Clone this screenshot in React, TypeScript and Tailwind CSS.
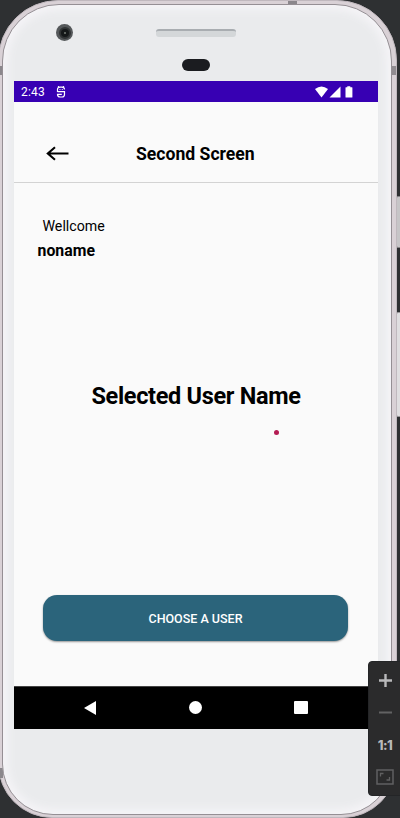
import React from "react";

function CameraHardware() {
  return (
    <div className="relative h-[76px] shrink-0">
      <div className="absolute left-[53px] top-[19px] flex h-[17px] w-[17px] items-center justify-center rounded-full bg-[#55585a]">
        <div className="flex h-[12px] w-[12px] items-center justify-center rounded-full border-2 border-[#303334] bg-[#151819]">
          <div className="h-[2px] w-[2px] rounded-full bg-[#747b75]" />
        </div>
      </div>
      <div className="absolute left-[153px] top-[24px] h-[8px] w-[80px] rounded-[3px] border-t-2 border-[#a9adb1] bg-[#d4d7d9]" />
      <div className="absolute left-[179px] top-[54px] h-[12px] w-[28px] rounded-full bg-[#1b1c20]" />
    </div>
  );
}

function StatusBar() {
  return (
    <div className="flex h-[21px] shrink-0 items-center bg-[#3700b3] pl-[7px] pr-[24px] text-white">
      <span className="w-[25px] whitespace-nowrap pt-px text-[12px] leading-[20px] tracking-[0.2px]">2:43</span>
      <svg className="ml-[10px]" width="10" height="12" viewBox="0 0 10 12" fill="none" stroke="currentColor" strokeWidth="1.2">
        <path d="M1.5 6V3.5Q1.5 1.2 4 1.2h2q2.5 0 2.5 2.3M1.5 5.7h7v2.5Q8.5 11 6 11H4Q1.5 11 1.5 8.3h4.3M2.1 .2l.8 1M7.9 .2l-.8 1M3.5 3.5h.9M5.8 3.5h.9" />
      </svg>
      <div className="ml-auto flex items-center">
        <svg width="13" height="12" viewBox="0 0 13 12" fill="currentColor"><path d="M0 3Q6.5-2 13 3L6.5 11.5Z" /></svg>
        <svg className="ml-[1px]" width="12" height="12" viewBox="0 0 12 12" fill="currentColor"><path d="M11.5 .5v11H.5Z" /></svg>
        <svg className="ml-[4px] mr-px" width="8" height="12" viewBox="0 0 8 12" fill="currentColor"><path d="M2.3 .3h3v1H7q.4 0 .4.5v9.2q0 .5-.4.5H.9q-.4 0-.4-.5V1.8q0-.5.4-.5h1.4Z" /></svg>
      </div>
    </div>
  );
}

function NavigationBar() {
  return (
    <div className="flex h-[43px] shrink-0 items-center border-t border-[#444] bg-black pb-px pl-[70px] text-white">
      <svg width="12" height="14" viewBox="0 0 12 14" fill="currentColor"><path d="M12 0v14L0 7Z" /></svg>
      <div className="ml-[93px] h-[13px] w-[13px] rounded-full bg-white" />
      <div className="ml-[92px] h-[13px] w-[14px] rounded-[1px] bg-white" />
    </div>
  );
}

function ZoomTools() {
  return (
    <div className="absolute left-[368px] top-[661px] flex h-[135px] w-[36px] flex-col items-center rounded-[4px] border border-[#242527] bg-[#2b2b2c] text-[#b9b9ba]">
      <svg className="mt-[12px] -ml-[2px] shrink-0" width="13" height="13" viewBox="0 0 13 13" stroke="currentColor" strokeWidth="2.4"><path d="M0 6.5h13M6.5 0v13" /></svg>
      <svg className="mt-[24px] -ml-[2px] shrink-0" width="13" height="3" viewBox="0 0 13 3" stroke="#626263" strokeWidth="2"><path d="M0 1.5h13" /></svg>
      <span className="mt-[22px] -ml-[2px] font-[Inter,sans-serif] text-[13px] leading-[18px] font-extrabold tracking-[-0.5px]">1:1</span>
      <svg className="mt-[15px] -ml-[2px] shrink-0" width="18" height="16" viewBox="0 0 18 16" fill="none" stroke="#606061">
        <path d="M1 1h16v14H1Z" strokeWidth="1.5" />
        <path d="M4.5 7.5v-3h3M13.5 8v3h-3" strokeWidth="1.3" />
      </svg>
    </div>
  );
}

export default function App() {
  return (
    <div className="relative flex h-[818px] w-[400px] overflow-hidden bg-[#2e3032] font-[Roboto,sans-serif]">
      <div className="absolute left-[396px] top-[196px] h-[52px] w-[6px] rounded-[2px] border border-[#868487] bg-[#c6c5c7]" />
      <div className="absolute left-[396px] top-[312px] h-[105px] w-[6px] rounded-[2px] border border-[#99979a] bg-[#dfdee0]" />

      <div className="relative -ml-[2px] h-[818px] w-[399px] shrink-0 rounded-t-[60px] rounded-b-[54px] border border-[#c0b8be] bg-[#d9d1d6] px-[3px] pt-[3px] pb-[2px]">
        <div className="absolute left-[289px] top-0 h-[3px] w-[9px] bg-[#8b878c]" />
        <div className="absolute right-0 top-[65px] h-[9px] w-[6px] bg-[#918c91]" />
        <div className="absolute left-0 top-[65px] h-[9px] w-[4px] bg-[#8b878c]" />
        <div className="absolute left-0 top-[767px] h-[10px] w-[4px] bg-[#8b878c]" />
        <div className="relative flex h-full w-[390px] flex-col rounded-t-[57px] rounded-b-[51px] border border-[#958f94] bg-[#eaebed] shadow-[inset_0_0_9px_5px_#f5f4f7]">
          <CameraHardware />
          <div className="ml-[11px] flex h-[648px] w-[364px] shrink-0 flex-col">
            <StatusBar />
            <main className="relative flex h-[584px] flex-col bg-[#fafafa] text-black">
              <header className="flex h-[81px] shrink-0 items-center border-b border-[#d3d3d3] pt-[23px] pl-[32px]">
                <svg width="24" height="16" viewBox="0 0 24 16" fill="none" stroke="currentColor" strokeWidth="2.1"><path d="M22.5 7.5H2M9 1.3L1.8 7.5L9 13.7" /></svg>
                <h1 className="ml-[66px] whitespace-nowrap text-[17.6px] leading-[24px] font-bold">Second Screen</h1>
              </header>
              <div className="pt-[31px] pl-[23.5px]">
                <p className="pl-[5px] text-[14.2px] leading-[24px]">Wellcome</p>
                <p className="mt-px text-[15.8px] leading-[24px] font-bold tracking-[0.05px]">noname</p>
              </div>
              <h2 className="mt-[117px] text-center text-[23.5px] leading-[32px] font-bold tracking-[-0.32px]">Selected User Name</h2>
              <div className="absolute left-[259.5px] top-[327.5px] h-[5px] w-[5px] rounded-full bg-[#b41c53]" />
              <button className="mt-auto mb-[45px] ml-[29px] h-[46px] w-[305px] rounded-[14px] bg-[#2b647b] pt-[2px] text-[12.5px] font-medium text-white shadow-[0_1px_2px_rgba(0,0,0,0.4)]">CHOOSE A USER</button>
            </main>
            <NavigationBar />
          </div>
        </div>
      </div>
      <ZoomTools />
    </div>
  );
}
